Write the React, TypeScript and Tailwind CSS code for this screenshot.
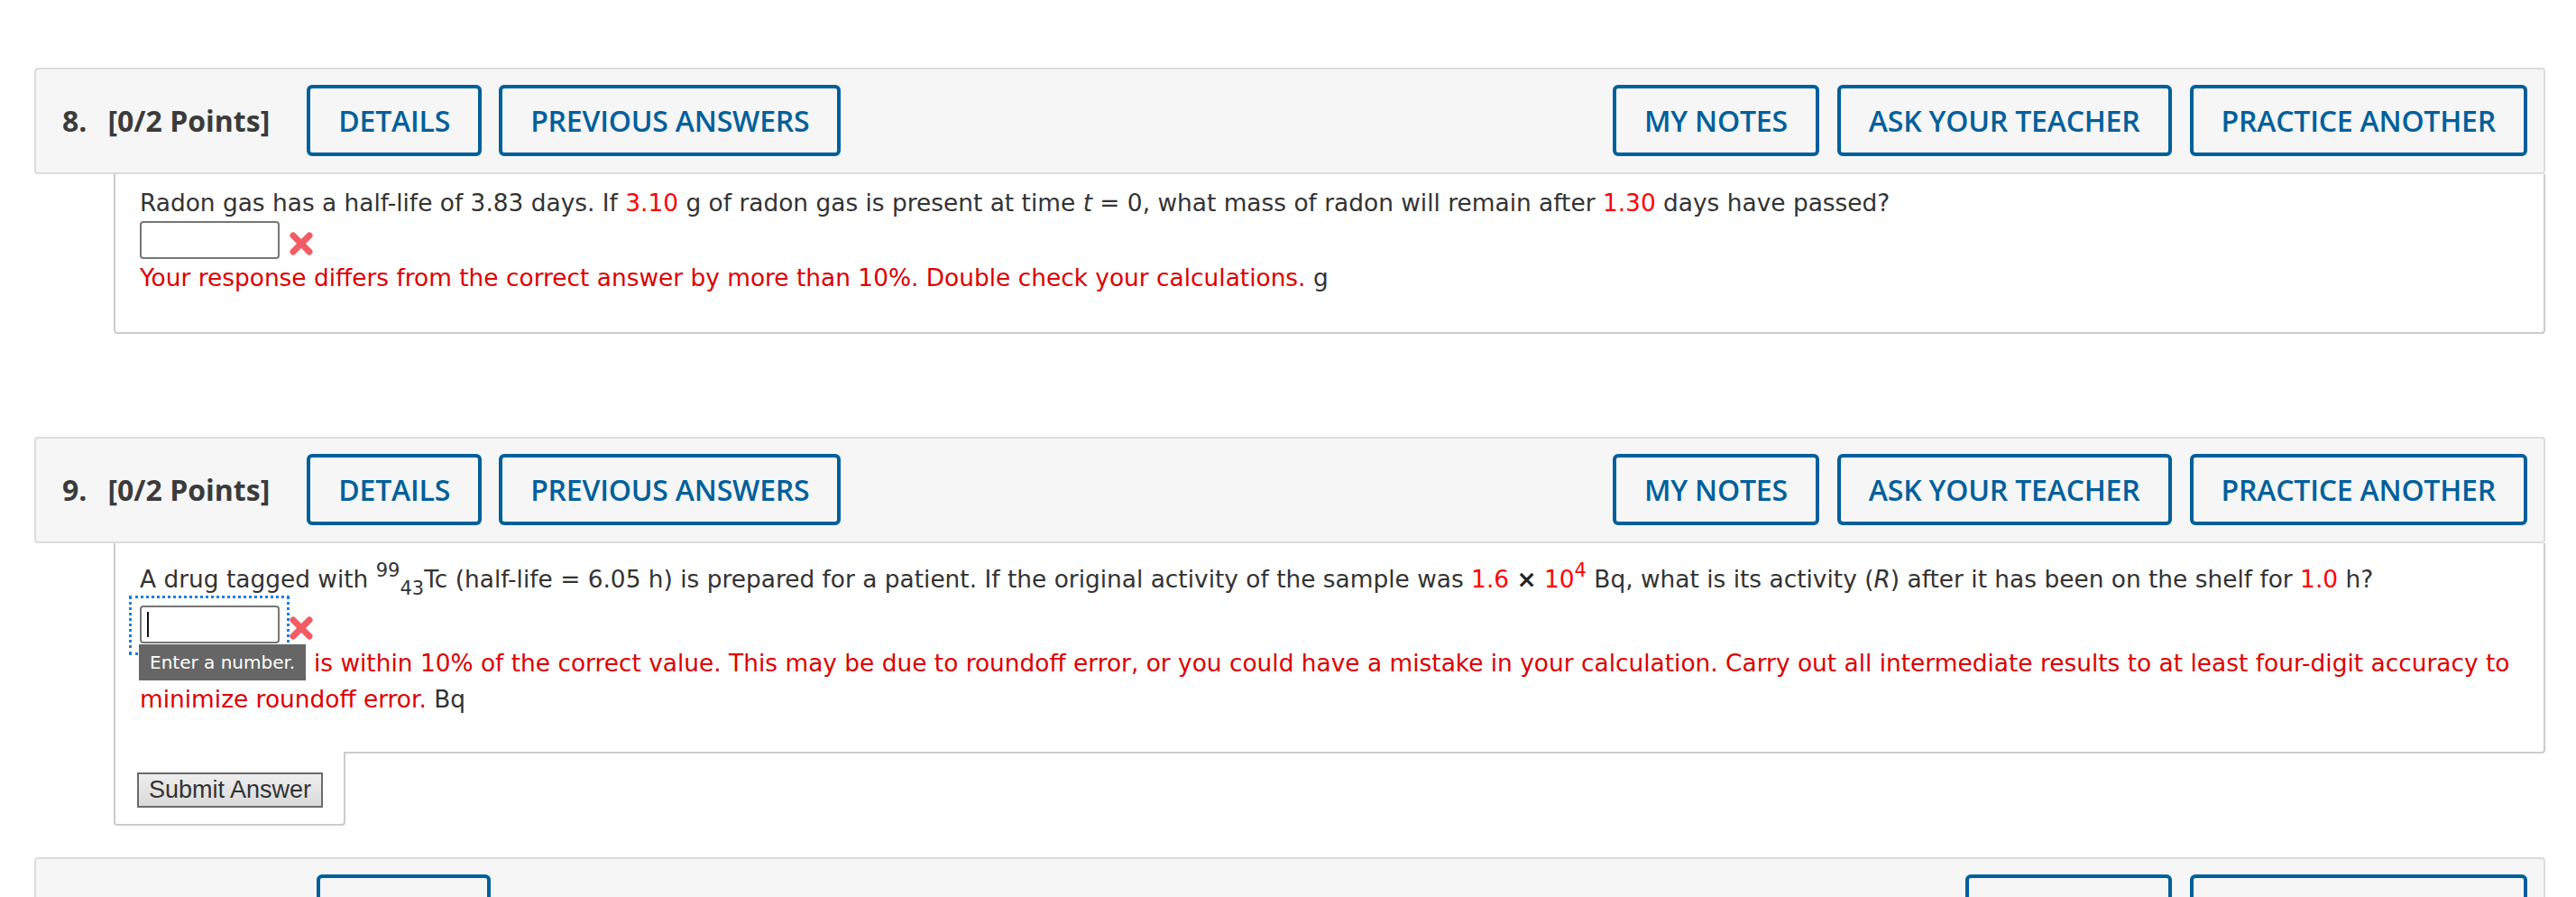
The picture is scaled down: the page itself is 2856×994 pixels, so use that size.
import React from "react";

const headFont = { fontFamily: '"Open Sans", "Liberation Sans", sans-serif' };

type HeaderProps = {
  num: string;
  points?: string;
  gap?: string;
  left: string[];
  right: string[];
};

function NavButton({ label }: { label: string }) {
  return (
    <button className="flex h-[79px] items-center rounded-[6px] border-[4px] border-[#00609b] bg-transparent px-[31px] text-[32px] font-semibold tracking-[-0.2px] text-[#00609b]">
      {label}
    </button>
  );
}

function QuestionHeader({ num, points = "[0/2 Points]", gap = "mr-[41px]", left, right }: HeaderProps) {
  return (
    <div
      className="flex items-center rounded-[4px] border-2 border-[#dcdcdc] bg-[#f6f6f6] pt-[17px] pb-[18px] pl-[29px] pr-[18px]"
      style={headFont}
    >
      <h2 className={`flex text-[32px] font-bold text-[#3b3b3b] ${gap}`}>
        <span>{num}</span>
        <span className="ml-[23px]">{points}</span>
      </h2>
      <div className="flex gap-[19px]">
        {left.map((l) => (
          <NavButton key={l} label={l} />
        ))}
      </div>
      <div className="ml-auto flex gap-[20px]">
        {right.map((l) => (
          <NavButton key={l} label={l} />
        ))}
      </div>
    </div>
  );
}

function WrongMark() {
  return (
    <svg width="28" height="26" viewBox="0 0 28 26" className="ml-[10px]">
      <g stroke="#f2545c" strokeWidth="7" strokeLinecap="round" opacity="0.95">
        <line x1="5" y1="4" x2="23" y2="22" />
        <line x1="23" y1="4" x2="5" y2="22" />
      </g>
    </svg>
  );
}

export default function App() {
  const red = "text-[#ff0000]";
  const err = "text-[#dd0000]";

  return (
    <div
      className="min-h-screen bg-white pt-[75px] pl-[38px] pr-[34px] text-[26.4px] leading-[40px] text-[#333333]"
      style={{ fontFamily: '"DejaVu Sans", Verdana, sans-serif' }}
    >
      {/* question 8 */}
      <section>
        <QuestionHeader
          num="8."
          left={["DETAILS", "PREVIOUS ANSWERS"]}
          right={["MY NOTES", "ASK YOUR TEACHER", "PRACTICE ANOTHER"]}
        />
        <div className="ml-[88px] rounded-b-[4px] border-x-2 border-b-2 border-[#cccccc] pt-[12px] pb-[40px] pl-[27px]">
          <p className="whitespace-nowrap">
            Radon gas has a half-life of 3.83 days. If{" "}
            <span className={red}>3.10</span> g of radon gas is present at time{" "}
            <i>t</i> = 0, what mass of radon will remain after{" "}
            <span className={red}>1.30</span> days have passed?
          </p>
          <div className="flex h-[43px] items-start">
            <input
              type="text"
              className="h-[42px] w-[155px] rounded-[4px] border-2 border-[#767676] bg-white"
            />
            <div className="mt-[12px]">
              <WrongMark />
            </div>
          </div>
          <p className="whitespace-nowrap">
            <span className={err}>
              Your response differs from the correct answer by more than 10%.
              Double check your calculations.
            </span>{" "}
            g
          </p>
        </div>
      </section>

      {/* question 9 */}
      <section className="mt-[114px]">
        <QuestionHeader
          num="9."
          left={["DETAILS", "PREVIOUS ANSWERS"]}
          right={["MY NOTES", "ASK YOUR TEACHER", "PRACTICE ANOTHER"]}
        />
        <div className="ml-[88px] rounded-br-[4px] border-x-2 border-b-2 border-[#cccccc] pt-[20px] pb-[38px] pl-[27px]">
          <p className="whitespace-nowrap">
            A drug tagged with{" "}
            <span className="relative -top-[12px] text-[21px]">99</span>
            <span className="relative top-[8px] text-[21px]">43</span>Tc
            (half-life = 6.05 h) is prepared for a patient. If the original
            activity of the sample was <span className={red}>1.6</span>{" "}
            <b className="text-[#222]">×</b> <span className={red}>10</span>
            <span className={`relative -top-[12px] text-[21px] ${red}`}>4</span>{" "}
            Bq, what is its activity (<i>R</i>) after it has been on the shelf
            for <span className={red}>1.0</span> h?
          </p>
          <div className="relative mt-[7px] flex h-[44px] items-start">
            <div className="absolute -left-[12px] -top-[11px] h-[66px] w-[178px] border-[3px] border-dotted border-[#1a7fe0]" />
            <div className="relative flex h-[42px] w-[155px] items-center rounded-[4px] border-2 border-[#767676] bg-white pl-[6px]">
              <div className="h-[28px] w-[2px] bg-[#111]" />
            </div>
            <div className="relative mt-[12px]">
              <WrongMark />
            </div>
          </div>
          <div className="relative">
            <p className="whitespace-nowrap">
              <span className={err}>
                Your response is within 10% of the correct value. This may be
                due to roundoff error, or you could have a mistake in your
                calculation. Carry out all intermediate results to at least
                four-digit accuracy to
              </span>
            </p>
            <p className="whitespace-nowrap">
              <span className={err}>minimize roundoff error.</span> Bq
            </p>
            <div className="absolute -left-[1px] -top-[1px] flex h-[40px] items-center bg-[#666666] px-[12px] text-[20px] text-white">
              Enter a number.
            </div>
          </div>
        </div>
        <div className="relative -mt-[2px] ml-[88px] h-[82px] w-[257px] rounded-b-[4px] border-x-2 border-b-2 border-[#cccccc] bg-white pt-[22px] pl-[24px]">
          <button
            className="h-[39px] border-2 border-[#6b6b6b] bg-gradient-to-b from-[#eeeeee] to-[#dadada] px-[11px] text-[27px] leading-none text-[#333]"
            style={{ fontFamily: '"Liberation Sans", Arial, sans-serif' }}
          >
            Submit Answer
          </button>
        </div>
      </section>

      {/* question 10 (cut off) */}
      <section className="mt-[35px]">
        <QuestionHeader
          num="10."
          points="[0/1 Points]"
          gap="mr-[33px]"
          left={["DETAILS"]}
          right={["MY NOTES", "PRACTICE ANOTHER"]}
        />
      </section>
    </div>
  );
}
